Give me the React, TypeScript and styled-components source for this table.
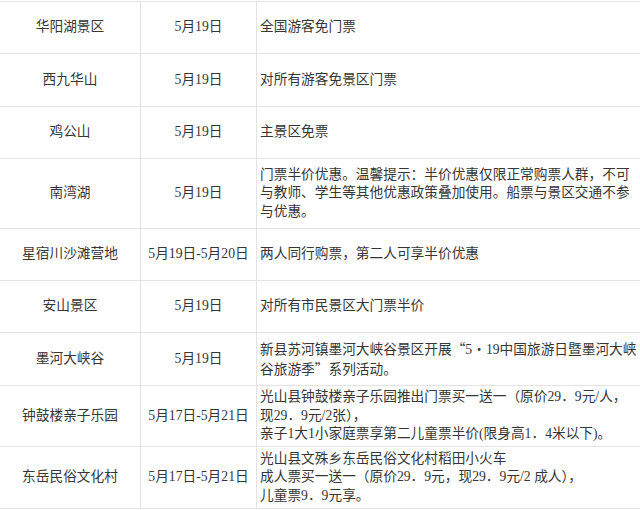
import React from "react";
import styled, { createGlobalStyle } from "styled-components";

const Global = createGlobalStyle`
  html, body {
    margin: 0;
    padding: 0;
    background: #ffffff;
    overflow: hidden;
  }
  body {
    font-family: "Liberation Serif", "Noto Sans CJK SC", serif;
    color: #363636;
  }
`;

const Sheet = styled.div`
  width: 640px;
  height: 510px;
  overflow: hidden;
  padding-top: 1px;
  box-sizing: border-box;
`;

const Table = styled.div`
  width: 700px;
  border-top: 1px solid #e3e3e3;
`;

const Row = styled.div<{ $h: number }>`
  display: grid;
  grid-template-columns: 141px 116px 1fr;
  height: ${(p) => p.$h}px;
  box-sizing: border-box;
  border-bottom: 1px solid #e3e3e3;
`;

const Cell = styled.div<{ $center?: boolean }>`
  display: flex;
  flex-direction: column;
  justify-content: center;
  align-items: ${(p) => (p.$center ? "center" : "flex-start")};
  box-sizing: border-box;
  border-right: 1px solid #e3e3e3;
  padding: ${(p) => (p.$center ? "0" : "0 0 0 3px")};
  font-size: 13.7px;
  line-height: 18.5px;
  white-space: nowrap;
`;

const Line = styled.div`
  white-space: nowrap;
`;

const Cjk = styled.span`
  font-family: "Noto Sans CJK SC", sans-serif;
`;

type Item = {
  name: string;
  date: string;
  h: number;
  lines: React.ReactNode[];
};

const items: Item[] = [
  { name: "华阳湖景区", date: "5月19日", h: 52, lines: ["全国游客免门票"] },
  { name: "西九华山", date: "5月19日", h: 53, lines: ["对所有游客免景区门票"] },
  { name: "鸡公山", date: "5月19日", h: 52, lines: ["主景区免票"] },
  {
    name: "南湾湖",
    date: "5月19日",
    h: 70,
    lines: [
      "门票半价优惠。温馨提示：半价优惠仅限正常购票人群，不可",
      "与教师、学生等其他优惠政策叠加使用。船票与景区交通不参",
      "与优惠。",
    ],
  },
  {
    name: "星宿川沙滩营地",
    date: "5月19日-5月20日",
    h: 52,
    lines: ["两人同行购票，第二人可享半价优惠"],
  },
  { name: "安山景区", date: "5月19日", h: 52, lines: ["对所有市民景区大门票半价"] },
  {
    name: "墨河大峡谷",
    date: "5月19日",
    h: 53,
    lines: [
      <>
        新县苏河镇墨河大峡谷景区开展<Cjk>“</Cjk>5<Cjk>・</Cjk>19中国旅游日暨墨河大峡
      </>,
      <>
        谷旅游季<Cjk>”</Cjk>系列活动。
      </>,
    ],
  },
  {
    name: "钟鼓楼亲子乐园",
    date: "5月17日-5月21日",
    h: 61,
    lines: [
      "光山县钟鼓楼亲子乐园推出门票买一送一（原价29．9元/人，",
      "现29．9元/2张），",
      "亲子1大1小家庭票享第二儿童票半价(限身高1．4米以下)。",
    ],
  },
  {
    name: "东岳民俗文化村",
    date: "5月17日-5月21日",
    h: 62,
    lines: [
      "光山县文殊乡东岳民俗文化村稻田小火车",
      "成人票买一送一（原价29．9元，现29．9元/2 成人），",
      "儿童票9．9元享。",
    ],
  },
];

export default function App() {
  return (
    <>
      <Global />
      <Sheet>
        <Table>
          {items.map((it, i) => (
            <Row key={i} $h={it.h}>
              <Cell $center>{it.name}</Cell>
              <Cell $center>{it.date}</Cell>
              <Cell>
                {it.lines.map((l, j) => (
                  <Line key={j}>{l}</Line>
                ))}
              </Cell>
            </Row>
          ))}
        </Table>
      </Sheet>
    </>
  );
}
